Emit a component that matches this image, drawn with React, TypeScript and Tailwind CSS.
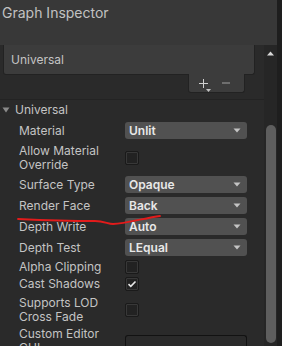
import React from "react";

const Arrow = () => (
  <svg width="8" height="5" viewBox="0 0 8 5" className="shrink-0">
    <path d="M0.5 0.5 H7.5 L4 4.5 Z" fill="#c4c4c4" />
  </svg>
);

const Dropdown = ({ value }: { value: string }) => (
  <div className="w-[122px] h-[17px] rounded-[3px] bg-[#515151] flex items-center justify-between pl-[4px] pr-[6px]">
    <span className="text-[12px] font-semibold text-[#e8e8e8] leading-none">{value}</span>
    <Arrow />
  </div>
);

const Checkbox = ({ checked }: { checked?: boolean }) => (
  <div className="w-[14px] h-[14px] rounded-[2px] bg-[#222222] border border-[#1a1a1a] shadow-[inset_0_0_0_1px_#383838] flex items-center justify-center">
    {checked && (
      <svg width="10" height="8" viewBox="0 0 10 8">
        <path d="M1.5 4.2 L3.8 6.3 L8.5 1.5" stroke="#e8e8e8" strokeWidth="1.6" fill="none" />
      </svg>
    )}
  </div>
);

const Row = ({
  label,
  h,
  children,
}: {
  label: React.ReactNode;
  h: string;
  children: React.ReactNode;
}) => (
  <div className={`flex shrink-0 items-center pl-[19px] ${h}`}>
    <div className="w-[106px] text-[12px] leading-[13.5px] text-[#c4c4c4]">{label}</div>
    {children}
  </div>
);

export default function App() {
  return (
    <div
      className="w-[282px] h-[346px] overflow-hidden flex bg-[#1e1e1e] select-none"
      style={{ fontFamily: "Inter, 'Noto Sans', sans-serif" }}
    >
      <div className="w-[277px] flex flex-col">
        {/* header */}
        <div className="h-[45px] shrink-0 bg-[#383838] pl-[2px] pt-[3px] text-[14px] leading-[20px] text-[#c2c2c2]">
          Graph Inspector
        </div>

        <div className="flex-1 min-h-0 flex overflow-hidden">
          {/* content */}
          <div className="relative w-[264px] bg-[#2a2a2a] flex flex-col">
            {/* list */}
            <div className="shrink-0 ml-[3px] w-[252px] h-[30px] bg-[#3c3c3c] border-x border-b border-[#222222] rounded-b-[3px] flex items-center pl-[7px] text-[12px] text-[#c4c4c4]">
              Universal
            </div>
            <div className="shrink-0 self-end mr-[19px] w-[57px] h-[19px] -mt-[1px] bg-[#3c3c3c] border-x border-b border-[#222222] rounded-b-[3px] flex items-center gap-[14px] pl-[10px]">
              <div className="relative w-[9px] h-[9px]">
                <div className="absolute left-0 top-[4px] w-[9px] h-[1.5px] bg-[#d0d0d0]" />
                <div className="absolute left-[3.75px] top-0 w-[1.5px] h-[9px] bg-[#d0d0d0]" />
                <svg width="5" height="3" viewBox="0 0 5 3" className="absolute left-[7px] top-[10px]">
                  <path d="M0 0 H5 L2.5 3 Z" fill="#c4c4c4" />
                </svg>
              </div>
              <div className="w-[8px] h-[1.5px] bg-[#6e6e6e]" />
            </div>

            {/* foldout */}
            <div className="shrink-0 mt-[6px] h-[21px] border-t border-[#232323] flex items-center pl-[2px]">
              <svg width="8" height="6" viewBox="0 0 8 6" className="mr-[5px]">
                <path d="M0.5 0.5 H7.5 L4 5.5 Z" fill="#8a8a8a" />
              </svg>
              <span className="text-[12px] text-[#c4c4c4]">Universal</span>
            </div>

            <Row label="Material" h="h-[21px]">
              <Dropdown value="Unlit" />
            </Row>
            <Row
              label={
                <>
                  Allow Material
                  <br />
                  Override
                </>
              }
              h="h-[33px]"
            >
              <Checkbox />
            </Row>
            <Row label="Surface Type" h="h-[21px]">
              <Dropdown value="Opaque" />
            </Row>
            <Row label="Render Face" h="h-[21px]">
              <Dropdown value="Back" />
            </Row>
            <Row label="Depth Write" h="h-[21px]">
              <Dropdown value="Auto" />
            </Row>
            <Row label="Depth Test" h="h-[21px]">
              <Dropdown value="LEqual" />
            </Row>
            <Row label="Alpha Clipping" h="h-[17px]">
              <Checkbox />
            </Row>
            <Row label="Cast Shadows" h="h-[18px]">
              <Checkbox checked />
            </Row>
            <Row
              label={
                <>
                  Supports LOD
                  <br />
                  Cross Fade
                </>
              }
              h="h-[33px]"
            >
              <Checkbox />
            </Row>
            <div className="shrink-0 flex items-start pl-[19px] pt-[1px]">
              <div className="w-[106px] text-[12px] leading-[14px] text-[#c4c4c4]">
                Custom Editor
                <br />
                GUI
              </div>
              <div className="mt-[8px] w-[122px] h-[20px] rounded-[3px] bg-[#2a2a2a] border border-[#121212] border-b-[#1f1f1f]" />
            </div>

            {/* red annotation stroke */}
            <svg
              className="absolute left-0 top-0 pointer-events-none"
              width="264"
              height="301"
              viewBox="0 45 264 301"
            >
              <path
                d="M18 219 C 40 220, 70 221, 95 221 C 104 221, 108 224, 113 224 C 125 224, 145 218, 160 216"
                stroke="#e21b1b"
                strokeWidth="1.8"
                fill="none"
                strokeLinecap="round"
              />
            </svg>
          </div>

          {/* scrollbar */}
          <div className="w-[13px] bg-[#262626] flex flex-col items-center">
            <svg width="7" height="5" viewBox="0 0 7 5" className="mt-[6px] shrink-0">
              <path d="M0 4.5 H7 L3.5 0.5 Z" fill="#d8d8d8" />
            </svg>
            <div className="shrink-0 mt-[69px] w-[10px] h-[218px] rounded-full bg-[#5e5e5e]" />
          </div>
        </div>
      </div>
    </div>
  );
}
